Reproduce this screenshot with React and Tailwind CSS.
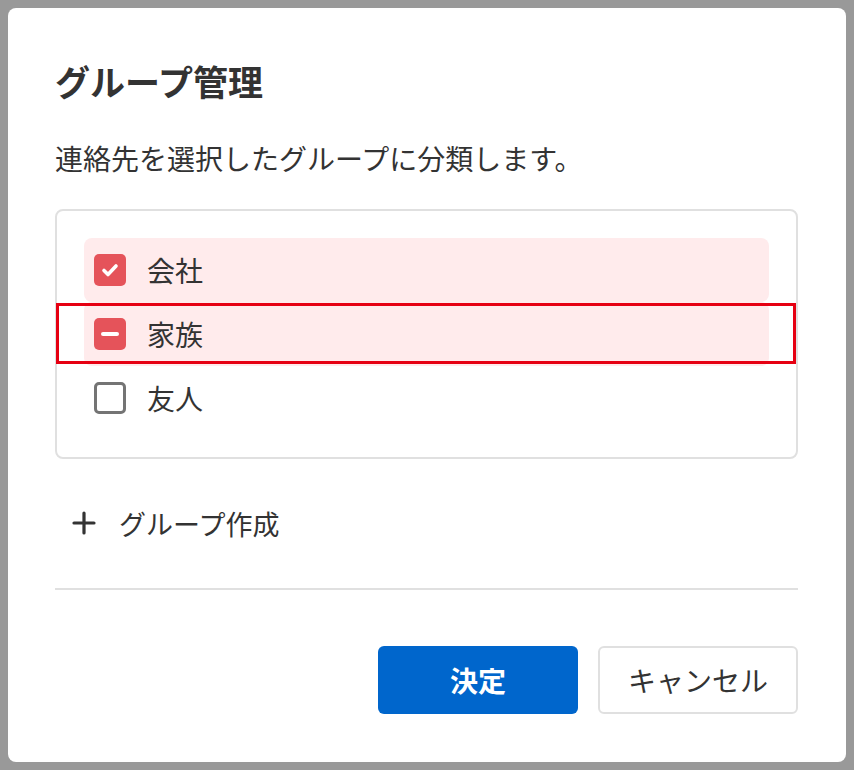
import React from "react";

const font = { fontFamily: '"Noto Sans CJK JP", "Noto Sans", sans-serif' };

function CheckBox({ state }) {
  if (state === "checked") {
    return (
      <div className="w-[32px] h-[32px] rounded-[5px] bg-[#e5535a] flex items-center justify-center shrink-0">
        <svg width="32" height="32" viewBox="0 0 32 32" fill="none">
          <path d="M10 16.5 L14 20.5 L22 12" stroke="#fff" strokeWidth="3.6" strokeLinecap="round" strokeLinejoin="round" />
        </svg>
      </div>
    );
  }
  if (state === "indeterminate") {
    return (
      <div className="w-[32px] h-[32px] rounded-[5px] bg-[#e5535a] flex items-center justify-center shrink-0">
        <div className="w-[18px] h-[4px] rounded-full bg-white" />
      </div>
    );
  }
  return <div className="w-[32px] h-[32px] rounded-[5px] border-[3px] border-[#747474] bg-white shrink-0" />;
}

function Row({ state, label, highlight, annotate }) {
  return (
    <div className={`relative h-[64px] flex items-center pl-[10px] gap-[21px] rounded-[8px] ${highlight ? "bg-[#ffebec]" : ""}`}>
      <CheckBox state={state} />
      <span className="text-[28px] text-[#333] leading-none">{label}</span>
      {annotate && (
        <div className="absolute left-[-28px] top-[1px] w-[740px] h-[61px] border-[3px] border-[#e60012] pointer-events-none" />
      )}
    </div>
  );
}

export default function App() {
  return (
    <div style={font} className="w-[854px] h-[770px] bg-[#999999] p-[8px]">
      <div className="bg-white rounded-[8px] w-[838px] h-[754px] px-[47px] pt-[48px] flex flex-col">
        <h1 className="h-[48px] flex items-center text-[35px] font-bold text-[#333] leading-none">グループ管理</h1>
        <p className="mt-[34px] h-[40px] flex items-center text-[28px] text-[#333] leading-none">連絡先を選択したグループに分類します。</p>
        <div className="mt-[31px] w-[743px] border-2 border-[#e0e0e0] rounded-[8px] p-[27px]">
          <Row state="checked" label="会社" highlight />
          <Row state="indeterminate" label="家族" highlight annotate />
          <Row state="unchecked" label="友人" />
        </div>
        <div className="mt-[32px] h-[64px] flex items-center pl-[17px] gap-[23px]">
          <svg width="24" height="24" viewBox="0 0 24 24" fill="none">
            <path d="M12 2 V22 M2 12 H22" stroke="#333" strokeWidth="3.2" strokeLinecap="round" />
          </svg>
          <span className="text-[27px] text-[#333] leading-none">グループ作成</span>
        </div>
        <div className="mt-[33px] h-[2px] w-[743px] bg-[#e0e0e0]" />
        <div className="mt-[56px] w-[743px] flex justify-end gap-[20px]">
          <button className="w-[200px] h-[68px] rounded-[6px] bg-[#0066cc] text-white text-[28px] font-bold flex items-center justify-center leading-none">決定</button>
          <button className="w-[200px] h-[68px] rounded-[6px] bg-white border-2 border-[#e0e0e0] text-[#333] text-[28px] flex items-center justify-center leading-none">キャンセル</button>
        </div>
      </div>
    </div>
  );
}
